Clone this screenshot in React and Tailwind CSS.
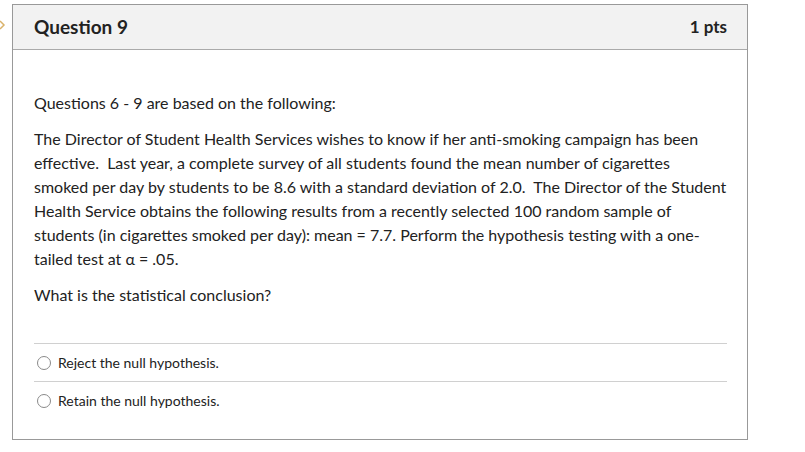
import React from "react";

function Radio() {
  return (
    <span className="block w-[14px] h-[14px] rounded-full border border-[#8a8a8a] bg-white shrink-0" />
  );
}

const PARA =
  "The Director of Student Health Services wishes to know if her anti-smoking campaign has been effective.  Last year, a complete survey of all students found the mean number of cigarettes smoked per day by students to be 8.6 with a standard deviation of 2.0.  The Director of the Student Health Service obtains the following results from a recently selected 100 random sample of students (in cigarettes smoked per day): mean = 7.7. Perform the hypothesis testing with a one-tailed test at α = .05.";

export default function App() {
  const font = { fontFamily: "Lato, 'Open Sans', sans-serif" };
  return (
    <div className="w-[805px] h-[452px] bg-white relative overflow-hidden text-[#2d3b45]" style={font}>
      <svg className="absolute left-0 top-[20px]" width="6" height="10" viewBox="0 0 6 10">
        <path d="M0 1 L4 5 L0 9" fill="none" stroke="#d9b26a" strokeWidth="1.5" />
      </svg>
      <div className="pt-[4px] pl-[12px]">
        <div className="w-[736px] h-[436px] border border-[#999] flex flex-col">
          <div className="h-[45px] bg-[#f2f2f2] border-b border-[#aaa] flex items-center justify-between pl-[21px] pr-[20px] text-[#222]">
            <span className="text-[19px] font-bold">Question 9</span>
            <span className="text-[17px] font-bold">1 pts</span>
          </div>
          <div className="pl-[21px] pr-[20px] pt-[41px] text-[16px] leading-[24px] text-[#222]">
            <p className="mb-[12px]">Questions 6 - 9 are based on the following:</p>
            <p className="w-[694px] mb-[12px] whitespace-pre-wrap">{PARA}</p>
            <p>What is the statistical conclusion?</p>
            <div className="mt-[36px]">
              <div className="border-t border-[#d0d0d0] h-[38px] flex items-center gap-[7px] pl-[3px] text-[14px]">
                <Radio />
                <span>Reject the null hypothesis.</span>
              </div>
              <div className="border-t border-[#d0d0d0] h-[38px] flex items-center gap-[7px] pl-[3px] text-[14px]">
                <Radio />
                <span>Retain the null hypothesis.</span>
              </div>
            </div>
          </div>
        </div>
      </div>
    </div>
  );
}
